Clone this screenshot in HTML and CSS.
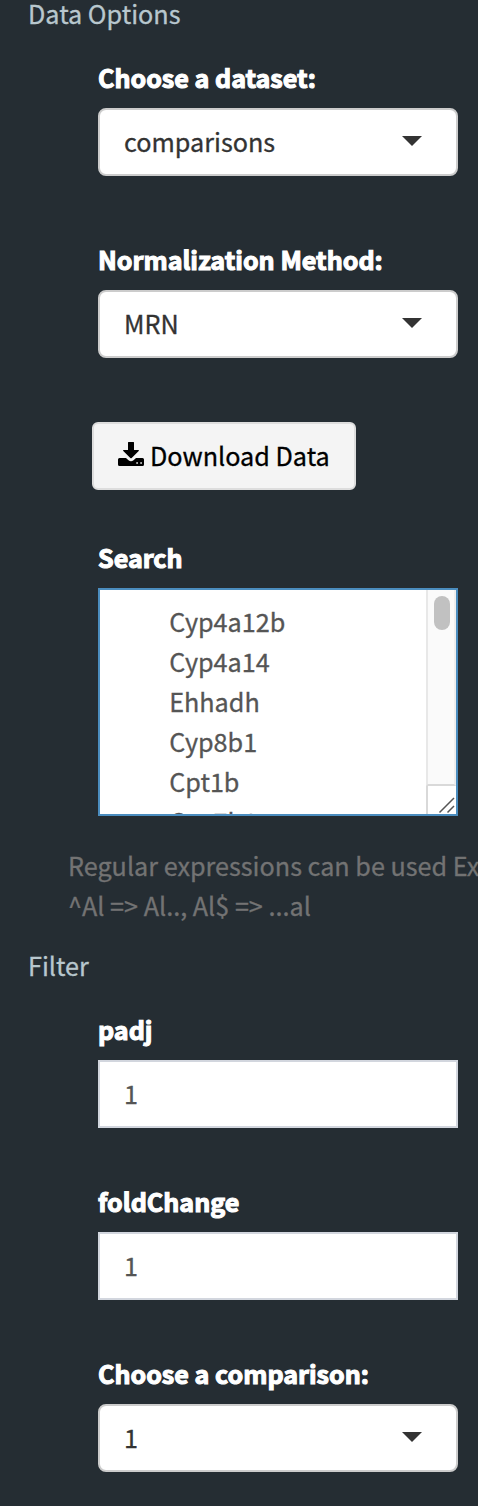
FILE: index.html
```html
<!DOCTYPE html>
<html lang="en">
<head>
<meta charset="utf-8">
<title>Data Options</title>
<link rel="stylesheet" href="styles.css">
</head>
<body>
<aside class="sidebar">
  <h4 class="heading">Data Options</h4>
  <div class="field first">
    <label class="label">Choose a dataset:</label>
    <div class="control select"><span>comparisons</span><i class="caret"></i></div>
  </div>
  <div class="field">
    <label class="label">Normalization Method:</label>
    <div class="control select"><span>MRN</span><i class="caret"></i></div>
  </div>
  <button class="download">
    <svg class="icon" viewBox="0 0 26 26"><path fill-rule="evenodd" d="M10.500 0h5q.5 0 .5.5V8h4.300q1.200 0 .4 1L13.700 16q-.7.700-1.400 0L5.300 9q-.8-1 .4-1H10V.5q0-.5.5-.5zM1.500 16H8l2.500 2.300q2.500 2 5 0L18 16h6.500q1.500 0 1.500 1.500v5q0 1.500-1.500 1.500h-23Q0 24 0 22.500v-5Q0 16 1.500 16zM18.300 20.200v1.600h1.600v-1.600zm4 0v1.600h1.600v-1.600z"/></svg>
    <span>Download Data</span>
  </button>
  <div class="search">
    <label class="label">Search</label>
    <div class="textarea">
      <div class="lines"><p>Cyp4a12b</p><p>Cyp4a14</p><p>Ehhadh</p><p>Cyp8b1</p><p>Cpt1b</p><p>Cyp7b1</p></div>
      <div class="scroll"><div class="track"><i class="thumb"></i></div>
        <svg class="grip" viewBox="0 0 28 28"><path d="M11.500 26.500 26 12M19.500 26.500l6.500-6.500"/></svg>
      </div>
    </div>
  </div>
  <p class="help">Regular expressions can be used Ex<br>^Al =&gt; Al.., Al$ =&gt; ...al</p>
  <h4 class="heading">Filter</h4>
  <div class="field first">
    <label class="label">padj</label>
    <div class="control">1</div>
  </div>
  <div class="field tight">
    <label class="label">foldChange</label>
    <div class="control">1</div>
  </div>
  <div class="field tight">
    <label class="label">Choose a comparison:</label>
    <div class="control select"><span>1</span><i class="caret"></i></div>
  </div>
</aside>
</body>
</html>
```
FILE: styles.css
```css
* { box-sizing: border-box; }
body { margin: 0; background: #252d33; }
.sidebar {
  display: flow-root;
  height: 1506px;
  overflow: hidden;
  color: #b8c7ce;
  font: 25.2px/40px "Noto Sans CJK SC", sans-serif;
  -webkit-text-stroke: 0.3px;
}
.heading { margin: -7px 0 0 28px; font-size: inherit; font-weight: 400; }
.field { margin: 63px 20px 0 98px; }
.field.first { margin-top: 24px; }
.field.tight { margin-top: 53px; }
.label { display: block; height: 51px; color: #fff; font-weight: 700; font-size: 25.1px; -webkit-text-stroke: 1.1px; }
.control {
  display: flex;
  align-items: center;
  height: 68px;
  padding: 0 34px 2px 24px;
  background: #fff;
  border: 2px solid #d2d6de;
  color: #555;
}
.select { justify-content: space-between; border-color: #ccc; border-radius: 8px; color: #333; }
.caret { border: 10px solid transparent; border-top-color: #333; border-bottom: 0; }
.download {
  display: flex;
  align-items: center;
  gap: 6px;
  width: 264px;
  height: 68px;
  margin: 64px 0 0 92px;
  padding: 0 0 2px 24px;
  border: 2px solid #ddd;
  border-radius: 6px;
  background: #f4f4f4;
  color: #000;
  font: inherit;
  white-space: nowrap;
}
.icon { flex: none; width: 26px; height: 26px; }
.search { margin: 47px 20px 0 98px; }
.textarea { display: flex; height: 228px; border: 2px solid #4b8dbf; background: #fff; color: #555; overflow: hidden; }
.lines { flex: 1; padding: 11px 0 0 69.2px; }
.lines p { margin: 0; }
.scroll { width: 30px; display: flex; flex-direction: column; }
.track { flex: 1; padding: 6px 0 0 6px; background: #fafafa; border-left: 2px solid #e8e8e8; border-right: 2px solid #eee; border-bottom: 2px solid #d9d9d9; }
.thumb { display: block; width: 16px; height: 34px; border-radius: 8px; background: #c1c1c1; }
.grip { width: 30px; height: 28px; border-left: 2px solid #d9d9d9; fill: none; stroke: #555; stroke-width: 1.5; }
.help { margin: 29px 0 27px 68px; white-space: nowrap; color: #737373; }
```
